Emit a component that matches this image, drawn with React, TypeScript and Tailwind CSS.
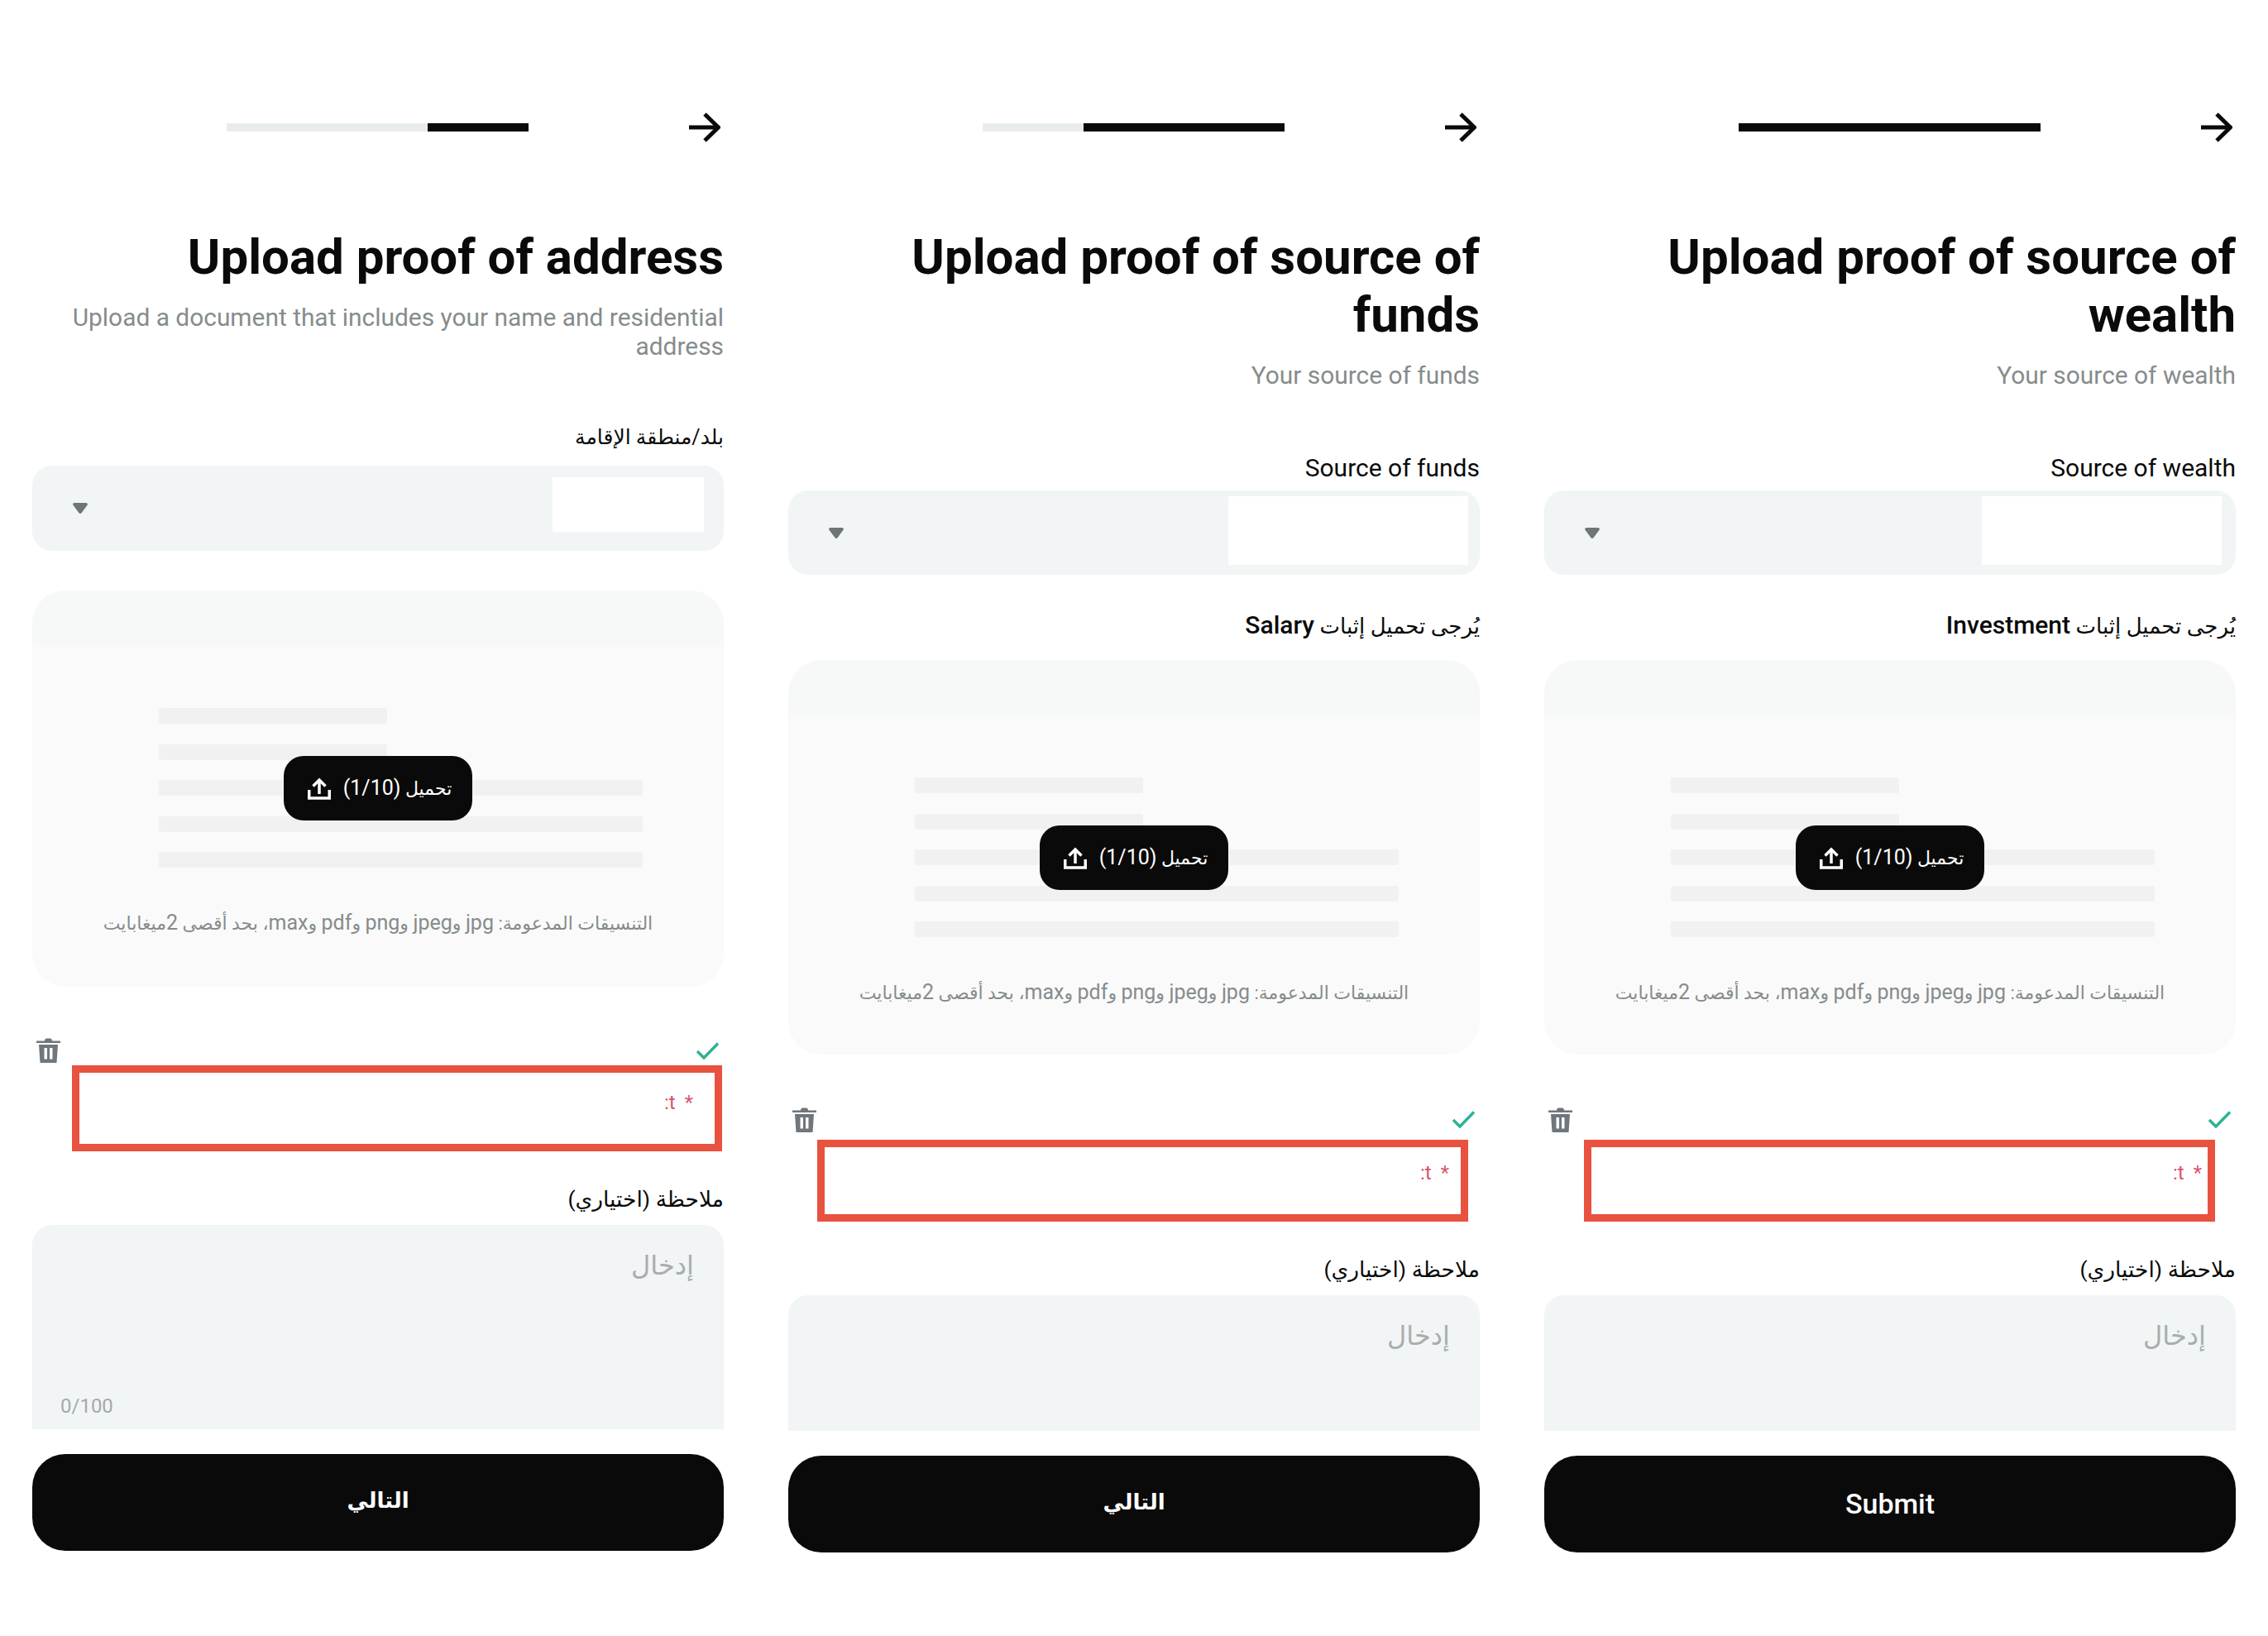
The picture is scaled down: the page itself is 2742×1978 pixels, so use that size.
import React from 'react';

interface PanelData {
  title: string[];
  subtitle: string[];
  label: string;
  labelText: string;
  uploadLabel?: string;
  grayW: string;
  blackW: string;
  subMt: string;
  labelMt: string;
  selectMt: string;
  selectH: string;
  whiteBox: string;
  selectPr: string;
  uploadLabelMt?: string;
  uploadMt: string;
  uploadH: string;
  trashMt: string;
  trashH: string;
  redMt: string;
  redBox: string;
  redPad: string;
  noteMt: string;
  areaH: string;
  counter: boolean;
  cta: string;
  ctaText: string;
}

const panels: PanelData[] = [
  {
    title: ['Upload proof of address'],
    subtitle: ['Upload a document that includes your name and residential', 'address'],
    label: 'بلد/منطقة الإقامة',
    labelText: 'text-[25px]',
    grayW: 'w-[243px]',
    blackW: 'w-[122px]',
    subMt: 'mt-[20px]',
    labelMt: 'mt-[75px]',
    selectMt: 'mt-[16px]',
    selectH: 'h-[103px]',
    whiteBox: 'w-[183px] h-[66px] mb-[10px]',
    selectPr: 'pr-[24px]',
    uploadMt: 'mt-[48px]',
    uploadH: 'h-[479px]',
    trashMt: 'mt-[62px]',
    trashH: 'h-[30px]',
    redMt: 'mt-[3px]',
    redBox: 'ml-[48px] w-[786px] h-[104px]',
    redPad: 'pr-[26px] pt-[21px]',
    noteMt: 'mt-[39px]',
    areaH: 'h-[247px]',
    counter: true,
    cta: 'التالي',
    ctaText: 'text-[26px] font-bold pb-[4px]',
  },
  {
    title: ['Upload proof of source of', 'funds'],
    subtitle: ['Your source of funds'],
    label: 'Source of funds',
    labelText: 'text-[30px]',
    uploadLabel: 'Salary',
    grayW: 'w-[122px]',
    blackW: 'w-[243px]',
    subMt: 'mt-[20px]',
    labelMt: 'mt-[77px]',
    selectMt: 'mt-[9px]',
    selectH: 'h-[102px]',
    whiteBox: 'w-[290px] h-[83px] mb-[6px]',
    selectPr: 'pr-[14px]',
    uploadLabelMt: 'mt-[43px]',
    uploadMt: 'mt-[23px]',
    uploadH: 'h-[477px]',
    trashMt: 'mt-[63px]',
    trashH: 'h-[31px]',
    redMt: 'mt-[9px]',
    redBox: 'ml-[35px] w-[787px] h-[99px]',
    redPad: 'pr-[14px] pt-[16px]',
    noteMt: 'mt-[39px]',
    areaH: 'h-[164px]',
    counter: false,
    cta: 'التالي',
    ctaText: 'text-[26px] font-bold pb-[4px]',
  },
  {
    title: ['Upload proof of source of', 'wealth'],
    subtitle: ['Your source of wealth'],
    label: 'Source of wealth',
    labelText: 'text-[30px]',
    uploadLabel: 'Investment',
    grayW: 'w-0',
    blackW: 'w-[365px]',
    subMt: 'mt-[20px]',
    labelMt: 'mt-[77px]',
    selectMt: 'mt-[9px]',
    selectH: 'h-[102px]',
    whiteBox: 'w-[290px] h-[83px] mb-[6px]',
    selectPr: 'pr-[17px]',
    uploadLabelMt: 'mt-[43px]',
    uploadMt: 'mt-[23px]',
    uploadH: 'h-[477px]',
    trashMt: 'mt-[63px]',
    trashH: 'h-[31px]',
    redMt: 'mt-[9px]',
    redBox: 'ml-[48px] w-[763px] h-[99px]',
    redPad: 'pr-[7px] pt-[16px]',
    noteMt: 'mt-[39px]',
    areaH: 'h-[164px]',
    counter: false,
    cta: 'Submit',
    ctaText: 'text-[34px] font-medium',
  },
];

function BackArrow() {
  return (
    <svg viewBox="0 0 38 36" className="w-[38px] h-[36px]" fill="none" stroke="#0a0a0a" strokeWidth="5">
      <path d="M0 18H35" />
      <path d="M19 2L35.5 18L19 34" />
    </svg>
  );
}

function TrashIcon() {
  return (
    <svg viewBox="0 0 29 30" className="w-[29px] h-[30px]" fill="#6f767c">
      <path d="M10 3.5C10 1.5 11 0.5 12.5 0.5H16.5C18 0.5 19 1.5 19 3.5H29V6H0V3.5Z" />
      <path fillRule="evenodd" d="M3 8H26L24.5 30H4.5ZM9.5 12V25.5H13V12ZM16 12V25.5H19.5V12Z" />
    </svg>
  );
}

function UploadIcon() {
  return (
    <svg viewBox="0 0 28 27" className="w-[28px] h-[27px]" fill="none" stroke="#ffffff" strokeWidth="3.5">
      <path d="M14 20V3" />
      <path d="M6.5 10.5L14 3L21.5 10.5" />
      <path d="M1.75 15V25H26.25V15" />
    </svg>
  );
}

function Panel({ data }: { data: PanelData }) {
  const hasUploadLabel = !!data.uploadLabel;
  return (
    <div className="flex flex-col min-w-0">
      <div className="flex items-center h-[36px]">
        <div className="flex h-[10px] ml-[235px] w-[365px]">
          <div className={`${data.grayW} bg-[#e9eced]`} />
          <div className={`${data.blackW} bg-[#0a0a0a]`} />
        </div>
        <div className="ml-auto mr-[4px]">
          <BackArrow />
        </div>
      </div>

      <div className="mt-[104px] text-right">
        {data.title.map((line) => (
          <div key={line} className="text-[60px] leading-[70px] font-bold text-[#0a0a0a] whitespace-nowrap">
            {line}
          </div>
        ))}
      </div>

      <div className={`${data.subMt} text-right`}>
        {data.subtitle.map((line) => (
          <div key={line} className="text-[29.9px] leading-[35px] text-[#868c8c] whitespace-nowrap">
            {line}
          </div>
        ))}
      </div>

      <div className={`${data.labelMt} ${data.labelText} text-right leading-[36px] text-[#0a0a0a]`}>{data.label}</div>

      <div className={`${data.selectMt} ${data.selectH} ${data.selectPr} flex items-center justify-between pl-[49px] bg-[#f1f5f5] rounded-[24px]`}>
        <svg viewBox="0 0 18 13" className="w-[18px] h-[13px]" fill="#6f7575">
          <path d="M2 0H16C17.6 0 18.4 1.6 17.5 2.8L10.5 12.2C9.8 13.2 8.2 13.2 7.5 12.2L0.5 2.8C-0.4 1.6 0.4 0 2 0Z" />
        </svg>
        <div className={`${data.whiteBox} bg-white`} />
      </div>

      {hasUploadLabel && (
        <div dir="rtl" className={`${data.uploadLabelMt} text-[26px] leading-[36px] text-[#0a0a0a]`}>
          يُرجى تحميل إثبات <span className="text-[30px] font-medium">{data.uploadLabel}</span>
        </div>
      )}

      <div className={`${data.uploadMt} ${data.uploadH} relative bg-[#fafafa] rounded-[40px] overflow-hidden`}>
        <div className="h-[67px] bg-[#f7f8f8]" />
        <div className="mt-[75px] ml-[153px] flex flex-col gap-[24.5px]">
          <div className="h-[19px] w-[276px] bg-[#f1f1f1] rounded-[3px]" />
          <div className="h-[19px] w-[276px] bg-[#f1f1f1] rounded-[3px]" />
          <div className="h-[19px] w-[585px] bg-[#f1f1f1] rounded-[3px]" />
          <div className="h-[19px] w-[585px] bg-[#f1f1f1] rounded-[3px]" />
          <div className="h-[19px] w-[585px] bg-[#f1f1f1] rounded-[3px]" />
        </div>
        <div className="absolute top-[200px] left-1/2 -translate-x-1/2 w-[228px] h-[78px] pl-[4px] bg-[#0a0a0a] rounded-[24px] flex items-center justify-center gap-[15px]">
          <UploadIcon />
          <span dir="rtl" className="text-[22px] leading-[30px] text-white whitespace-nowrap">
            تحميل <span className="text-[25px]">(1/10)</span>
          </span>
        </div>
        <div dir="rtl" className="mt-[47px] text-center text-[22px] leading-[40px] text-[#868c8c] whitespace-nowrap">
          التنسيقات المدعومة: <span className="text-[25px]">jpg</span> و<span className="text-[25px]">jpeg</span> و<span className="text-[25px]">png</span> و<span className="text-[25px]">pdf</span> و<span className="text-[25px]">max</span>، بحد أقصى <span className="text-[25px]">2</span>ميغابايت
        </div>
      </div>

      <div className={`${data.trashMt} ${data.trashH} flex items-center justify-between pl-[5px] pr-[6px]`}>
        <TrashIcon />
        <svg viewBox="0 0 27 21" className="w-[27px] h-[21px]" fill="none" stroke="#2fb295" strokeWidth="3.5">
          <path d="M1 11L9 19L26 1.5" />
        </svg>
      </div>

      <div className={`${data.redMt} ${data.redBox} ${data.redPad} border-[9px] border-[#e8523f] bg-white flex justify-end`}>
        <span className="text-[24px] leading-[30px] text-[#d9536f] whitespace-nowrap [word-spacing:5px]">:t *</span>
      </div>

      <div dir="rtl" className={`${data.noteMt} text-[26.5px] leading-[37px] text-[#0a0a0a]`}>
        ملاحظة (اختياري)
      </div>

      <div className={`mt-[13px] ${data.areaH} relative bg-[#f1f5f5] rounded-t-[24px] pt-[29px] pr-[36px]`}>
        <div dir="rtl" className="text-[32px] leading-[40px] text-[#a9adad]">
          إدخال
        </div>
        {data.counter && (
          <div className="absolute left-[34px] bottom-[14px] text-[24px] leading-[28px] text-[#a5aaaa]">0/100</div>
        )}
      </div>

      <button className={`mt-[30px] h-[117px] w-full bg-[#0a0a0a] rounded-[40px] text-white ${data.ctaText}`}>
        {data.cta}
      </button>
    </div>
  );
}

export default function App() {
  return (
    <div className="w-[2742px] h-[1978px] bg-white grid grid-cols-3 gap-[78px] px-[39px] pt-[136px] overflow-hidden font-[Roboto,'DejaVu_Sans',sans-serif]">
      {panels.map((panel) => (
        <Panel key={panel.label} data={panel} />
      ))}
    </div>
  );
}
